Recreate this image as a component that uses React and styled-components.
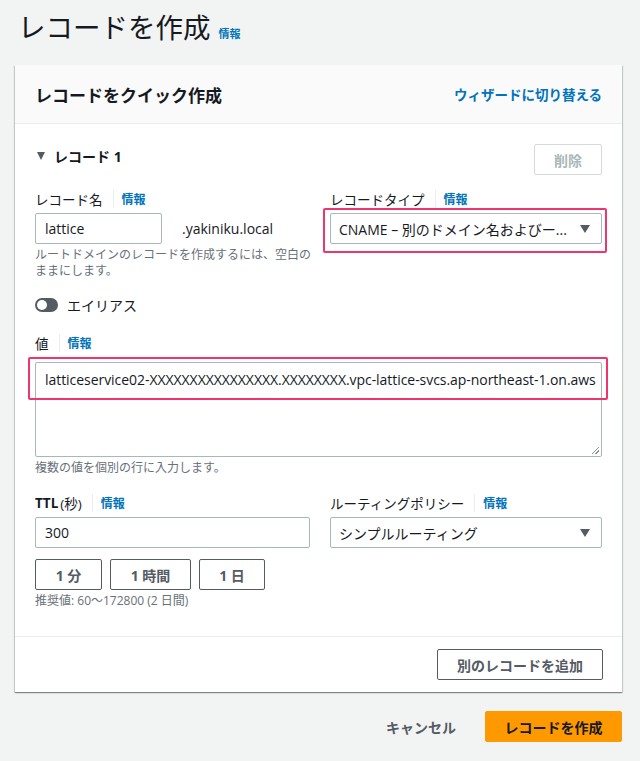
import React from 'react'
import styled, { createGlobalStyle, css } from 'styled-components'

const Global = createGlobalStyle`
  body {
    margin: 0;
    background: #f2f3f3;
    font-family: "Open Sans", "Noto Sans CJK JP", sans-serif;
    color: #16191f;
  }
`

const Page = styled.div`
  padding: 0 18px 0 15px;
  width: 640px;
  box-sizing: border-box;
`
const PageTitle = styled.h1`
  margin: 0;
  padding: 8px 0 0 3px;
  height: 65px;
  box-sizing: border-box;
  font-size: 27.5px;
  font-weight: 400;
  line-height: 40px;
  display: flex;
  align-items: baseline;
  gap: 8px;
`
const InfoLink = styled.a`
  font-size: ${p => p.small ? '11px' : '12px'};
  font-weight: 700;
  color: #0073bb;
  text-decoration: none;
`
const Card = styled.div`
  background: #fff;
  box-shadow: 0 1px 1px 0 rgba(0, 28, 36, 0.3), 1px 1px 1px 0 rgba(0, 28, 36, 0.15), -1px 1px 1px 0 rgba(0, 28, 36, 0.15);
`
const CardHeader = styled.div`
  height: 58px;
  background: #fafafa;
  border-bottom: 1px solid #eaeded;
  display: flex;
  align-items: center;
  justify-content: space-between;
  padding: 0 20px 0 20px;
`
const CardTitle = styled.h2`
  margin: 0;
  font-size: 17px;
  font-weight: 700;
  line-height: 22px;
  margin-top: 3px;
`
const HeaderLink = styled.a`
  font-size: 13.5px;
  font-weight: 700;
  color: #0073bb;
  text-decoration: none;
`
const CardBody = styled.div`
  padding: 20px 20px 27px;
`
const RecordHead = styled.div`
  display: flex;
  align-items: center;
  justify-content: space-between;
`
const Expander = styled.div`
  display: flex;
  align-items: center;
  gap: 9px;
  padding-left: 2px;
  font-size: 14px;
  font-weight: 700;
  margin-top: -8px;
`
const Caret = styled.span`
  width: 0;
  height: 0;
  border-left: 4.5px solid transparent;
  border-right: 4.5px solid transparent;
  border-top: 8px solid #545b64;
`
const Button = styled.button`
  font-family: inherit;
  font-size: 14px;
  font-weight: 700;
  height: 31px;
  padding: 0 ${p => p.pad || 18}px;
  border-radius: 2px;
  background: #fff;
  color: #545b64;
  border: 1px solid #545b64;
  ${p => p.disabled && css`
    color: #aab7b8;
    border-color: #d5dbdb;
  `}
  ${p => p.width && css`width: ${p.width}px;`}
`
const Grid = styled.div`
  display: grid;
  grid-template-columns: 275px 272px;
  column-gap: 20px;
  margin-top: ${p => p.top}px;
`
const Field = styled.div`
  display: flex;
  flex-direction: column;
`
const Label = styled.div`
  display: flex;
  align-items: center;
  height: 20px;
  margin-bottom: ${p => p.gap || 4}px;
  font-size: 13.5px;
  font-weight: 400;
`
const LabelSep = styled.span`
  width: 1px;
  height: 18px;
  background: #eaeded;
  margin: 0 8px 0 10px;
`
const Bold = styled.b`
  font-weight: 700;
  margin-right: 2px;
`
const Input = styled.div`
  height: 31px;
  box-sizing: border-box;
  border: 1px solid #aab7b8;
  border-radius: 2px;
  padding: 0 9px;
  display: flex;
  align-items: center;
  font-size: 14px;
  width: ${p => p.width ? `${p.width}px` : 'auto'};
  flex-shrink: 0;
`
const InlineRow = styled.div`
  display: flex;
  align-items: center;
  gap: 20px;
  font-size: 14px;
`
const Hint = styled.div`
  font-size: 12px;
  line-height: 16px;
  color: #687078;
  margin-top: 3px;
  ${p => p.narrow && css`width: 285px;`}
`
const Highlight = styled.div`
  position: relative;
  &::after {
    content: '';
    position: absolute;
    top: ${p => p.t}px;
    left: ${p => p.l}px;
    right: ${p => p.r}px;
    ${p => p.h ? css`height: ${p.h}px;` : css`bottom: ${p.b}px;`}
    border: 2.5px solid #f0356e;
    border-radius: 2px;
    pointer-events: none;
  }
`
const Select = styled(Input)`
  justify-content: space-between;
  padding: 0 11px 0 8px;
  span {
    white-space: nowrap;
  }
`
const SelectCaret = styled.i`
  flex-shrink: 0;
  width: 0;
  height: 0;
  border-left: 5px solid transparent;
  border-right: 5px solid transparent;
  border-top: 8px solid #545b64;
  margin-left: 12px;
`
const ToggleRow = styled.div`
  display: flex;
  align-items: center;
  gap: 9px;
  margin-top: 16px;
  font-size: 14px;
  height: 20px;
`
const Toggle = styled.span`
  width: 23px;
  height: 14px;
  border-radius: 7px;
  background: #545b64;
  position: relative;
  &::after {
    content: '';
    position: absolute;
    left: 2px;
    top: 2px;
    width: 10px;
    height: 10px;
    border-radius: 50%;
    background: #fff;
  }
`
const Section = styled.div`
  margin-top: ${p => p.top}px;
`
const TextArea = styled.div`
  height: 95px;
  box-sizing: border-box;
  border: 1px solid #aab7b8;
  border-radius: 2px;
  padding: 7px 9px;
  font-size: 14px;
  letter-spacing: -0.05px;
  white-space: nowrap;
  position: relative;
  &::after {
    content: '';
    position: absolute;
    right: 2px;
    bottom: 2px;
    width: 7px;
    height: 7px;
    background: linear-gradient(135deg, transparent 45%, #879596 45%, #879596 55%, transparent 55%, transparent 70%, #879596 70%, #879596 80%, transparent 80%);
  }
`
const ButtonRow = styled.div`
  display: flex;
  gap: 8px;
  margin-top: 11px;
`
const CardFooter = styled.div`
  border-top: 1px solid #eaeded;
  padding: 12px 19px 12px 20px;
  display: flex;
  justify-content: flex-end;
`
const Actions = styled.div`
  display: flex;
  justify-content: flex-end;
  align-items: center;
  gap: 29px;
  margin-top: 19px;
`
const TextButton = styled.span`
  font-size: 14px;
  font-weight: 700;
  color: #545b64;
`
const Primary = styled.button`
  font-family: inherit;
  font-size: 14px;
  font-weight: 700;
  color: #16191f;
  background: #ff9900;
  border: 1px solid #ff9900;
  border-radius: 2px;
  height: 31px;
  width: 137px;
`

const FieldLabel = ({ children, gap }) => (
  <Label gap={gap}>
    {children}
    <LabelSep />
    <InfoLink>情報</InfoLink>
  </Label>
)

export default function App() {
  return (
    <Page>
      <Global />
      <PageTitle>
        レコードを作成
        <InfoLink small>情報</InfoLink>
      </PageTitle>
      <Card>
        <CardHeader>
          <CardTitle>レコードをクイック作成</CardTitle>
          <HeaderLink>ウィザードに切り替える</HeaderLink>
        </CardHeader>
        <CardBody>
          <RecordHead>
            <Expander>
              <Caret />
              レコード 1
            </Expander>
            <Button disabled width={68}>削除</Button>
          </RecordHead>
          <Grid top={14}>
            <Field>
              <FieldLabel>レコード名</FieldLabel>
              <InlineRow>
                <Input width={127}>lattice</Input>
                <span>.yakiniku.local</span>
              </InlineRow>
              <Hint narrow>ルートドメインのレコードを作成するには、空白のままにします。</Hint>
            </Field>
            <Field>
              <FieldLabel>レコードタイプ</FieldLabel>
              <Highlight t={-5} l={-7} r={-5} b={-9}>
                <Select>
                  <span>CNAME – 別のドメイン名およびー...</span>
                  <SelectCaret />
                </Select>
              </Highlight>
            </Field>
          </Grid>
          <ToggleRow>
            <Toggle />
            エイリアス
          </ToggleRow>
          <Section top={18}>
            <FieldLabel gap={9}>値</FieldLabel>
            <Highlight t={-5} l={-7} r={-6} h={39}>
              <TextArea>latticeservice02-XXXXXXXXXXXXXXXX.XXXXXXXX.vpc-lattice-svcs.ap-northeast-1.on.aws</TextArea>
            </Highlight>
            <Hint>複数の値を個別の行に入力します。</Hint>
          </Section>
          <Grid top={17}>
            <Field>
              <FieldLabel><Bold>TTL</Bold> (秒)</FieldLabel>
              <Input>300</Input>
              <ButtonRow>
                <Button width={67}>1 分</Button>
                <Button width={81}>1 時間</Button>
                <Button width={66}>1 日</Button>
              </ButtonRow>
              <Hint>推奨値: 60〜172800 (2 日間)</Hint>
            </Field>
            <Field>
              <FieldLabel>ルーティングポリシー</FieldLabel>
              <Select>
                <span>シンプルルーティング</span>
                <SelectCaret />
              </Select>
            </Field>
          </Grid>
        </CardBody>
        <CardFooter>
          <Button width={166}>別のレコードを追加</Button>
        </CardFooter>
      </Card>
      <Actions>
        <TextButton>キャンセル</TextButton>
        <Primary>レコードを作成</Primary>
      </Actions>
    </Page>
  )
}
